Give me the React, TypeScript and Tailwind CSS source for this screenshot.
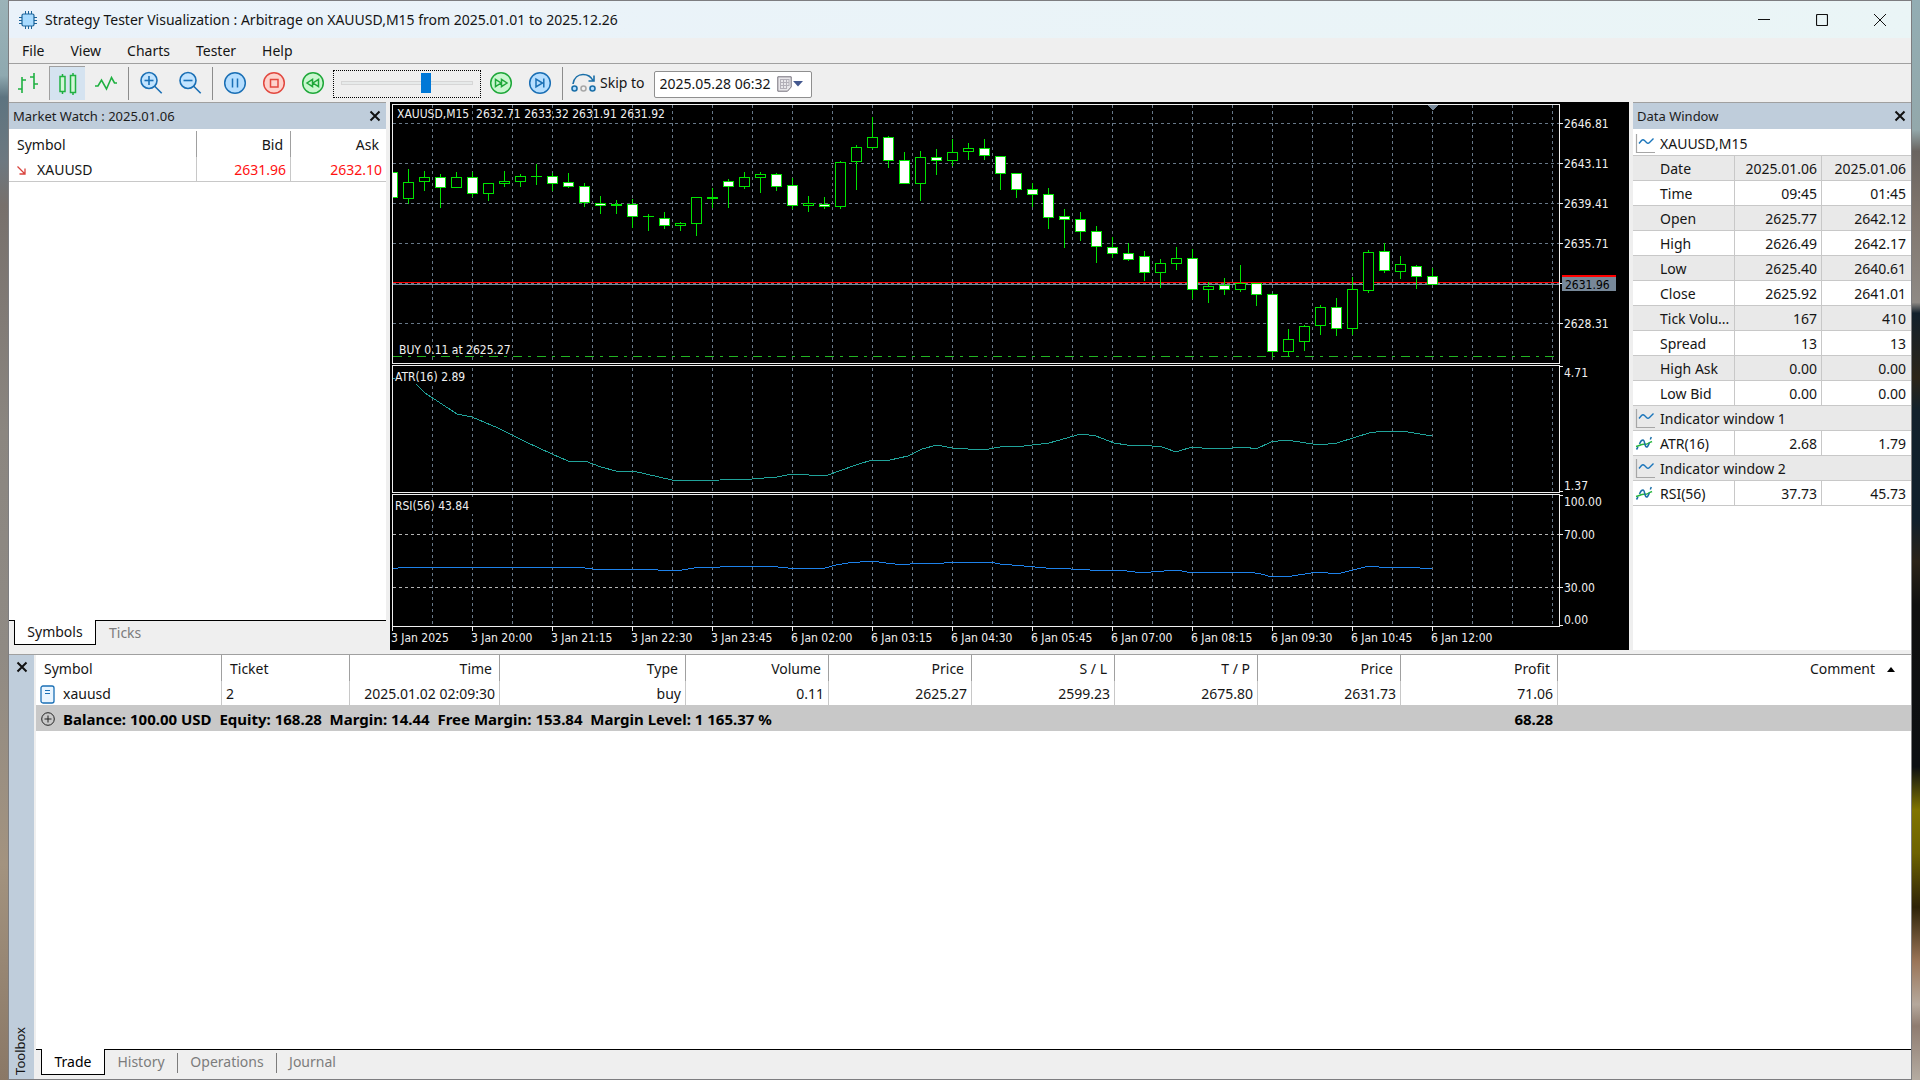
import React from "react";

const MENU = ["File", "View", "Charts", "Tester", "Help"];

const TIME_LABELS = [
	"3 Jan 2025",
	"3 Jan 20:00",
	"3 Jan 21:15",
	"3 Jan 22:30",
	"3 Jan 23:45",
	"6 Jan 02:00",
	"6 Jan 03:15",
	"6 Jan 04:30",
	"6 Jan 05:45",
	"6 Jan 07:00",
	"6 Jan 08:15",
	"6 Jan 09:30",
	"6 Jan 10:45",
	"6 Jan 12:00",
];

const PRICES = [
	{ y: 21, label: "2646.81" },
	{ y: 61, label: "2643.11" },
	{ y: 101, label: "2639.41" },
	{ y: 141, label: "2635.71" },
	{ y: 181, label: "" },
	{ y: 221, label: "2628.31" },
];

// high, body top, body bottom, low, bearish (chart pixels, one candle every 16px)
const CANDLES = [
	[70, 70, 95, 95, 1],
	[67, 80, 96, 101, 0],
	[69, 75, 79, 88, 0],
	[72, 75, 85, 105, 1],
	[70, 75, 85, 85, 0],
	[70, 75, 91, 94, 1],
	[81, 81, 91, 98, 0],
	[69, 79, 81, 84, 0],
	[72, 74, 79, 84, 0],
	[62, 74, 74, 82, 0],
	[71, 74, 81, 88, 1],
	[71, 80, 84, 85, 1],
	[81, 84, 100, 104, 1],
	[94, 101, 103, 111, 1],
	[98, 102, 103, 111, 0],
	[97, 102, 114, 125, 1],
	[112, 114, 114, 128, 0],
	[110, 116, 123, 126, 1],
	[120, 121, 123, 128, 0],
	[95, 95, 121, 133, 0],
	[86, 95, 96, 105, 0],
	[77, 79, 84, 105, 1],
	[70, 75, 84, 86, 0],
	[70, 72, 75, 90, 0],
	[71, 72, 84, 88, 1],
	[76, 83, 103, 106, 1],
	[94, 101, 103, 109, 0],
	[95, 102, 104, 106, 1],
	[59, 60, 104, 106, 0],
	[43, 45, 59, 87, 0],
	[15, 35, 45, 46, 0],
	[34, 35, 58, 65, 1],
	[50, 58, 81, 81, 1],
	[49, 55, 81, 98, 0],
	[47, 55, 58, 72, 1],
	[37, 50, 58, 63, 0],
	[41, 46, 49, 57, 0],
	[37, 46, 53, 57, 1],
	[54, 54, 71, 87, 1],
	[71, 71, 87, 95, 1],
	[81, 87, 92, 104, 1],
	[86, 92, 115, 126, 1],
	[107, 114, 117, 145, 1],
	[110, 117, 129, 138, 1],
	[124, 129, 144, 160, 1],
	[135, 145, 151, 155, 1],
	[141, 151, 157, 158, 1],
	[149, 154, 170, 178, 1],
	[157, 161, 170, 185, 0],
	[145, 156, 161, 167, 0],
	[147, 156, 187, 196, 1],
	[180, 184, 187, 200, 0],
	[176, 183, 187, 192, 1],
	[163, 181, 187, 189, 0],
	[181, 181, 192, 203, 1],
	[191, 192, 249, 254, 1],
	[227, 237, 249, 254, 0],
	[223, 224, 239, 248, 0],
	[203, 205, 223, 232, 0],
	[196, 205, 226, 233, 1],
	[175, 187, 226, 232, 0],
	[148, 150, 188, 190, 0],
	[141, 149, 168, 170, 1],
	[154, 162, 169, 176, 0],
	[163, 164, 174, 186, 1],
	[166, 174, 182, 182, 1],
];

const ATR =
	"2,276 7,276 25,281 35,291 67,312 82,315 108,326 136,340 162,352 178,359 195,359 211,365 226,369 243,369 282,378 292,379 330,378 362,377 387,375 402,372 435,374 466,363 482,358 500,358 518,354 532,347 547,343 562,346 593,348 610,345 634,344 659,341 691,332 706,334 724,341 737,343 762,344 772,345 786,350 802,345 812,346 842,346 855,345 866,347 881,340 896,338 930,343 947,341 979,331 994,329 1018,330 1042,334";

const RSI =
	"2,467 14,465 42,465 53,466 70,465 85,466 91,465 187,465 203,467 265,467 268,468 292,468 304,466 330,465 346,464 378,464 398,466 435,466 446,463 458,461 482,459 496,461 514,463 526,461 554,461 574,460 600,460 610,462 634,464 656,466 681,467 700,468 728,468 745,470 761,470 787,468 802,471 822,470 838,471 859,470 871,472 882,475 902,474 928,470 947,472 979,464 998,466 1018,465 1042,467";

type DataRow = { kind?: "window" | "indicator"; name: string; values?: string[] };

const DATA_ROWS: DataRow[] = [
	{ kind: "window", name: "XAUUSD,M15" },
	{ name: "Date", values: ["2025.01.06", "2025.01.06"] },
	{ name: "Time", values: ["09:45", "01:45"] },
	{ name: "Open", values: ["2625.77", "2642.12"] },
	{ name: "High", values: ["2626.49", "2642.17"] },
	{ name: "Low", values: ["2625.40", "2640.61"] },
	{ name: "Close", values: ["2625.92", "2641.01"] },
	{ name: "Tick Volu...", values: ["167", "410"] },
	{ name: "Spread", values: ["13", "13"] },
	{ name: "High Ask", values: ["0.00", "0.00"] },
	{ name: "Low Bid", values: ["0.00", "0.00"] },
	{ kind: "window", name: "Indicator window 1" },
	{ kind: "indicator", name: "ATR(16)", values: ["2.68", "1.79"] },
	{ kind: "window", name: "Indicator window 2" },
	{ kind: "indicator", name: "RSI(56)", values: ["37.73", "45.73"] },
];

const TRADE_COLUMNS = [
	{ name: "Time", value: "2025.01.02 02:09:30" },
	{ name: "Type", value: "buy" },
	{ name: "Volume", value: "0.11" },
	{ name: "Price", value: "2625.27" },
	{ name: "S / L", value: "2599.23" },
	{ name: "T / P", value: "2675.80" },
	{ name: "Price", value: "2631.73" },
	{ name: "Profit", value: "71.06" },
];

const Separator = () => <span className="w-px h-[33px] mx-px bg-[#8c8c8c]" />;

interface ToolButtonProps {
	label: string;
	active?: boolean;
	children: React.ReactNode;
}

const ToolButton: React.FC<ToolButtonProps> = ({ label, active, children }) => (
	<button
		type="button"
		aria-label={label}
		className={
			active
				? "flex items-center justify-center w-9 h-[34px] bg-[#d5e3f0] border-t border-l border-[#a0a0a0]"
				: "flex items-center justify-center w-9 h-[34px]"
		}
	>
		{children}
	</button>
);

interface RoundIconProps {
	stroke: string;
	fill: string;
	children: React.ReactNode;
}

const RoundIcon: React.FC<RoundIconProps> = ({ stroke, fill, children }) => (
	<svg width="24" height="24" viewBox="0 0 24 24" fill="none" stroke={stroke} strokeWidth="1.5">
		<circle cx="12" cy="12" r="10.3" fill={fill} />
		{children}
	</svg>
);

const ZoomIcon = ({ plus }: { plus?: boolean }) => (
	<svg width="24" height="24" viewBox="0 0 24 24" fill="none" stroke="#1a6fb5" strokeWidth="1.6">
		<circle cx="10" cy="9.5" r="8" fill="#c2e4ff" />
		<path d="M5.5 9.5h9" />
		{plus && <path d="M10 5v9" />}
		<path d="M15.7 15.2l7 7" />
	</svg>
);

const CloseIcon = () => (
	<svg width="12" height="12" viewBox="0 0 12 12" stroke="#111" strokeWidth="2">
		<path d="M1.5 1.5l9 9M10.5 1.5l-9 9" />
	</svg>
);

const WindowIcon = () => (
	<svg width="20" height="20" viewBox="0 0 20 20" fill="none">
		<path d="M1.5 0v18.5H20" stroke="#a6a6a6" strokeWidth="1.2" />
		<path d="M4 9.5l2.500-3q1.500-1.500 3 0l2 2q1.500 1.500 3 0l4-4" stroke="#1a75bb" strokeWidth="1.4" />
	</svg>
);

const IndicatorIcon = () => (
	<svg width="18" height="16" viewBox="0 0 18 16" fill="none" strokeWidth="1.5">
		<path d="M1 10.500c3-.500 4-1.500 6-2s4 .500 6-1 3-1.500 4-2" stroke="#27b53c" />
		<path
			d="M1.500 13.500l1.500-2.500M4.500 8c1-2.800 2-4 3.500-4 2 0 1.500 7 3.500 7 1.500 0 2-2 2.800-4M15.300 3.500l1-2.500"
			stroke="#1a6fa8"
		/>
	</svg>
);

interface PanelHeaderProps {
	title: string;
}

const PanelHeader: React.FC<PanelHeaderProps> = ({ title }) => (
	<div className="flex items-center justify-between h-[27px] pl-1 pr-[5px] bg-[#bfcddb] border-t border-[#a0a0a0]">
		<h2 className="text-[13px] text-[#1c1c1c]">{title}</h2>
		<button type="button" aria-label={`Close ${title}`}>
			<CloseIcon />
		</button>
	</div>
);

const TitleBar = () => (
	<header className="flex items-center h-[37px] pl-[10px] pr-0.5 bg-linear-to-r from-[#eaf2fa] to-[#eaf5f6]">
		<svg width="18" height="18" viewBox="0 0 18 18" fill="none" stroke="#1b6399">
			<path d="M6.500 0v18M9.500 0v18M12.500 0v18M0 6.500h18M0 9.500h18M0 12.500h18" />
			<rect x="3" y="3" width="12" height="12" rx="1.5" fill="#a8dbff" strokeWidth="1.2" />
		</svg>
		<h1 className="flex-1 pl-2">
			Strategy Tester Visualization : Arbitrage on XAUUSD,M15 from 2025.01.01 to 2025.12.26
		</h1>
		<button type="button" aria-label="Minimize" className="flex justify-center w-[58px]">
			<svg width="12" height="12" viewBox="0 0 12 12" stroke="#111">
				<path d="M0 5.500h12" />
			</svg>
		</button>
		<button type="button" aria-label="Maximize" className="flex justify-center w-[58px]">
			<svg width="12" height="12" viewBox="0 0 12 12" stroke="#111" fill="none">
				<rect x="0.5" y="0.5" width="11" height="11" rx="1" strokeWidth="1.2" />
			</svg>
		</button>
		<button type="button" aria-label="Close" className="flex justify-center w-[58px]">
			<svg width="12" height="12" viewBox="0 0 12 12" stroke="#111">
				<path d="M0 0l12 12M12 0L0 12" />
			</svg>
		</button>
	</header>
);

const Toolbar = () => (
	<div className="flex items-center h-[38px] pl-px gap-[3px]">
		<ToolButton label="Bar chart">
			<svg width="22" height="22" viewBox="0 0 22 22" fill="none" stroke="#1fb141" strokeWidth="1.6">
				<path d="M5 5v16M5 8h4M1 17h4M17 1v16M13 5h4M17 12h4" />
			</svg>
		</ToolButton>
		<ToolButton label="Candlesticks" active>
			<svg width="20" height="22" viewBox="0 0 20 22" stroke="#1fb141" strokeWidth="1.5">
				<path d="M4.500 1v20M15 0v22" />
				<rect x="2" y="3.5" width="5" height="15" fill="#d3f5d8" />
				<rect x="12.5" y="2.5" width="5" height="17" fill="#d3f5d8" />
			</svg>
		</ToolButton>
		<ToolButton label="Line chart">
			<svg width="22" height="16" viewBox="0 0 22 16" fill="none" stroke="#1fb141" strokeWidth="1.6">
				<path d="M0 11h3l3.500-6 5 9 5-11.500 3 5.500h2.500" />
			</svg>
		</ToolButton>
		<Separator />
		<ToolButton label="Zoom in">
			<ZoomIcon plus />
		</ToolButton>
		<ToolButton label="Zoom out">
			<ZoomIcon />
		</ToolButton>
		<Separator />
		<ToolButton label="Pause">
			<RoundIcon stroke="#1a6fb5" fill="#b5deff">
				<path d="M9.500 7.500v9M14.500 7.500v9" />
			</RoundIcon>
		</ToolButton>
		<ToolButton label="Stop">
			<RoundIcon stroke="#e2483f" fill="#fdd3cd">
				<rect x="8.5" y="8.5" width="7.5" height="7.5" />
			</RoundIcon>
		</ToolButton>
		<ToolButton label="Slower">
			<RoundIcon stroke="#1fa83a" fill="#c9f7cf">
				<path d="M11.500 8.300v7.400L6 12zM17.500 8.300v7.400L12 12z" />
			</RoundIcon>
		</ToolButton>
		<div className="flex items-start w-[148px] h-7 mt-0.5 -mx-px px-[7px] pt-0.5 border border-dotted border-black">
			<input
				type="range"
				aria-label="Speed"
				min={0}
				max={32}
				defaultValue={21}
				className="appearance-none w-full h-5 bg-transparent [&::-webkit-slider-runnable-track]:h-1 [&::-webkit-slider-runnable-track]:bg-[#e7eaea] [&::-webkit-slider-runnable-track]:border [&::-webkit-slider-runnable-track]:border-[#d6d6d6] [&::-webkit-slider-thumb]:appearance-none [&::-webkit-slider-thumb]:w-[10px] [&::-webkit-slider-thumb]:h-5 [&::-webkit-slider-thumb]:-mt-[9px] [&::-webkit-slider-thumb]:bg-[#0078d7]"
			/>
		</div>
		<ToolButton label="Faster">
			<RoundIcon stroke="#1fa83a" fill="#c9f7cf">
				<path d="M6.500 8.300v7.400l5.500-3.700zM12.500 8.300v7.400l5.500-3.700z" />
			</RoundIcon>
		</ToolButton>
		<ToolButton label="Step forward">
			<RoundIcon stroke="#1a6fb5" fill="#b5deff">
				<path d="M8 8v8l6.500-4zM15.800 7.500v9" />
			</RoundIcon>
		</ToolButton>
		<Separator />
		<button type="button" className="flex items-center gap-1 pl-1 pr-1.5">
			<svg width="25" height="20" viewBox="0 0 25 20" fill="none" stroke="#1a6fa8" strokeWidth="1.6">
				<path d="M2 11C3 4.500 7.500 1.500 12 1.500c4.500 0 8 2 10 6M23 2.500V8h-5.500" />
				<circle cx="3.5" cy="15.5" r="2.5" fill="#b5deff" />
				<circle cx="12.5" cy="15.5" r="2.5" stroke="#a8a8a8" fill="#f2f2f2" />
				<circle cx="21.5" cy="15.5" r="2.5" fill="#b5deff" />
			</svg>
			Skip to
		</button>
		<div className="flex items-center w-[158px] h-[27px] mt-0.5 pl-[5px] pr-2 bg-white border border-[#8f8f8f] rounded-xs">
			<input
				type="text"
				aria-label="Skip to date"
				defaultValue="2025.05.28 06:32"
				className="flex-1 min-w-0 outline-none"
			/>
			<button type="button" aria-label="Open calendar" className="flex items-center gap-px">
				<svg width="15" height="16" viewBox="0 0 15 16" fill="none">
					<path d="M.8.800h13.400V11L10.500 15.200H.8z" fill="#e8e6ea" stroke="#74707a" />
					<path
						d="M3 3.500h9M3 6.500h9M3 9.500h9M3 12.500h7M3.500 3v10M6.500 3v10M9.500 3v10M12 3v7"
						stroke="#b2afb8"
					/>
				</svg>
				<svg width="10" height="6" viewBox="0 0 10 6">
					<path d="M0 0h10L5 5.500z" fill="#44588f" />
				</svg>
			</button>
		</div>
	</div>
);

const MarketWatch = () => (
	<section className="flex flex-col w-[377px]">
		<PanelHeader title="Market Watch : 2025.01.06" />
		<div className="flex-1 pt-0.5 bg-white">
			<table className="w-full table-fixed border-separate border-spacing-0 [&_th]:pt-0.5 [&_td]:pt-0.5">
				<colgroup>
					<col />
					<col className="w-[94px]" />
					<col className="w-[95px]" />
				</colgroup>
				<thead>
					<tr className="h-[26px]">
						<th className="pl-2 font-normal text-left border-r border-[#a0a0a0]">Symbol</th>
						<th className="pr-[7px] font-normal text-right border-r border-[#a0a0a0]">Bid</th>
						<th className="pr-[7px] font-normal text-right">Ask</th>
					</tr>
				</thead>
				<tbody>
					<tr className="h-[25px]">
						<td className="pl-2 border-r border-b border-[#c8c8c8]">
							<span className="flex items-center gap-[11px]">
								<svg width="9" height="9" viewBox="0 0 9 9" fill="none" stroke="#d9433d" strokeWidth="1.3">
									<path d="M.5.500l7.500 7.500M8 2.500V8H2.500" />
								</svg>
								XAUUSD
							</span>
						</td>
						<td className="pr-1 text-right text-[#ff1111] border-r border-b border-[#c8c8c8]">2631.96</td>
						<td className="pr-1 text-right text-[#ff1111] border-b border-[#c8c8c8]">2632.10</td>
					</tr>
				</tbody>
			</table>
		</div>
		<div className="flex h-[30px]">
			<span className="w-[5px] border-t border-black" />
			<button type="button" className="w-[82px] h-[25px] bg-white border-x border-b border-black">
				Symbols
			</button>
			<div className="flex-1 pl-[13px] border-t border-black">
				<button type="button" className="h-6 text-[#7c7c7c]">
					Ticks
				</button>
			</div>
		</div>
	</section>
);

const Chart = () => {
	const verticals = Array.from({ length: 29 }, (_, i) => 42 + i * 40);

	return (
		<svg
			viewBox="0 0 1239 548"
			className="flex-1 min-w-0 h-[548px] bg-black text-[12px] [font-family:'DejaVu_Sans_Condensed','DejaVu_Sans',sans-serif]"
			shapeRendering="crispEdges"
			fill="none"
		>
			<g stroke="#677888" strokeDasharray="3 3">
				{verticals.map((x) => (
					<path key={x} d={`M${x + 0.5} 3V261M${x + 0.5} 266V390M${x + 0.5} 393V524`} />
				))}
				{PRICES.map((p) => (
					<path key={p.y} d={`M3 ${p.y + 0.5}H1169`} />
				))}
			</g>
			<path d="M3 432.500H1169M3 485.500H1169" stroke="#b4b4b4" strokeDasharray="3 3" />
			<path d="M3 180.500H1169" stroke="#ff0000" />
			<path d="M3 182.500H1169" stroke="#778899" />
			<path d="M3 254.500H1169" stroke="#22b422" strokeDasharray="9 6 3 6" />

			{CANDLES.map(([high, top, bottom, low, bearish], i) => {
				const x = 2 + i * 16;
				return (
					<g key={i} stroke="#00e400">
						<path d={`M${x + 0.5} ${high}V${top}M${x + 0.5} ${bottom}V${low + 1}`} />
						{top === bottom ? (
							<path d={`M${x - 5} ${top + 0.5}H${x + 6}`} />
						) : (
							<rect
								x={x - 4.5}
								y={top + 0.5}
								width="10"
								height={bottom - top}
								fill={bearish ? "#fff" : "#000"}
							/>
						)}
					</g>
				);
			})}
			<rect x="0" y="3" width="2" height="258" fill="#000" />
			<path d="M1037 3h11l-5.500 5.500z" fill="#778899" />

			<polyline points={ATR} stroke="#20a39a" />
			<polyline points={RSI} stroke="#1e82ea" />

			<g stroke="#f0f0f0">
				<path d="M2.500 2.500H1169.500V261.500H2.500zM2.500 263.500H1169.500V390.500H2.500zM2.500 392.500H1169.500V524.500H2.500z" />
				{PRICES.map((p) => (
					<path key={p.y} d={`M1169 ${p.y + 0.5}h4`} />
				))}
				<path d="M1169 264.500h4M1169 389.500h4M1169 393.500h4M1169 432.500h4M1169 485.500h4M1169 523.500h4" />
				{TIME_LABELS.map((t, i) => (
					<path key={t} d={`M${2.5 + i * 80} 524v5`} />
				))}
			</g>

			<rect x="5" y="266" width="77" height="16" fill="#000" />
			<rect x="5" y="395" width="79" height="17" fill="#000" />
			<rect x="1172" y="173" width="54" height="16" fill="#778899" />
			<rect x="1172" y="173" width="54" height="2" fill="#ff0000" />

			<g fill="#f0f0f0">
				<text x="7" y="16" xmlSpace="preserve">
					{"XAUUSD,M15  2632.71 2633.32 2631.91 2631.92"}
				</text>
				<text x="9" y="252">BUY 0.11 at 2625.27</text>
				<text x="5" y="279">ATR(16) 2.89</text>
				<text x="5" y="408">RSI(56) 43.84</text>
				{PRICES.map((p) => (
					<text key={p.y} x="1174" y={p.y + 5}>
						{p.label}
					</text>
				))}
				<text x="1174" y="275">4.71</text>
				<text x="1174" y="388">1.37</text>
				<text x="1174" y="404">100.00</text>
				<text x="1174" y="437">70.00</text>
				<text x="1174" y="490">30.00</text>
				<text x="1174" y="522">0.00</text>
				{TIME_LABELS.map((t, i) => (
					<text key={t} x={1 + i * 80} y="540">
						{t}
					</text>
				))}
			</g>
			<text x="1175" y="187" fill="#000">
				2631.96
			</text>
		</svg>
	);
};

const DataWindow = () => (
	<section className="flex flex-col w-[278px]">
		<PanelHeader title="Data Window" />
		<div className="flex-1 pt-0.5 bg-white">
			<table className="w-full table-fixed border-separate border-spacing-0 [&_th]:pt-0.5 [&_td]:pt-0.5">
				<colgroup>
					<col className="w-[102px]" />
					<col className="w-[87px]" />
					<col />
				</colgroup>
				<tbody>
					{DATA_ROWS.map((row, i) => (
						<tr key={row.name} className={i % 2 ? "h-[25px] bg-[#e9e9e9]" : "h-[25px]"}>
							<th
								colSpan={row.values ? 1 : 3}
								className={
									row.values
										? "pl-0.5 font-normal text-left whitespace-nowrap border-r border-b border-[#c8c8c8]"
										: "pl-0.5 font-normal text-left whitespace-nowrap border-b border-[#c8c8c8] bg-inherit"
								}
							>
								<span className="flex items-center">
									<span className="w-[25px]">
										{row.kind === "window" && <WindowIcon />}
										{row.kind === "indicator" && <IndicatorIcon />}
									</span>
									{row.name}
								</span>
							</th>
							{row.values && (
								<>
									<td className="pr-1 text-right border-r border-b border-[#c8c8c8]">{row.values[0]}</td>
									<td className="pr-[5px] text-right border-b border-[#c8c8c8]">{row.values[1]}</td>
								</>
							)}
						</tr>
					))}
				</tbody>
			</table>
		</div>
	</section>
);

const Toolbox = () => (
	<section className="flex flex-1 border-t border-[#a0a0a0]">
		<div className="flex flex-col items-center justify-between w-[25px] pt-1.5 pb-1 bg-[#bfcddb]">
			<button type="button" aria-label="Close Toolbox">
				<CloseIcon />
			</button>
			<h2 className="rotate-180 pl-1 text-[13px] leading-4 [writing-mode:vertical-rl]">Toolbox</h2>
		</div>
		<div className="flex flex-col flex-1 ml-0.5">
			<div className="flex-1 bg-white">
				<table className="w-full table-fixed border-separate border-spacing-0 [&_th]:pt-0.5 [&_td]:pt-0.5">
					<colgroup>
						<col className="w-[186px]" />
						<col className="w-[128px]" />
						<col className="w-[150px]" />
						<col className="w-[186px]" />
						<col className="w-[143px]" />
						<col className="w-[143px]" />
						<col className="w-[143px]" />
						<col className="w-[143px]" />
						<col className="w-[143px]" />
						<col className="w-[157px]" />
						<col />
					</colgroup>
					<thead>
						<tr className="h-[26px]">
							<th className="pl-2 font-normal text-left border-r border-[#a0a0a0]">Symbol</th>
							<th className="pl-2 font-normal text-left border-r border-[#a0a0a0]">Ticket</th>
							{TRADE_COLUMNS.map((c, i) => (
								<th key={i} className="pr-[7px] font-normal text-right border-r border-[#a0a0a0]">
									{c.name}
								</th>
							))}
							<th className="pr-4 font-normal">
								<span className="flex items-center justify-end gap-3">
									Comment
									<svg width="8" height="5" viewBox="0 0 8 5">
										<path d="M4 0l4 5H0z" fill="#000" />
									</svg>
								</span>
							</th>
						</tr>
					</thead>
					<tbody>
						<tr className="h-6">
							<td className="pl-1 border-r border-[#c8c8c8]">
								<span className="flex items-center gap-2">
									<svg width="15" height="19" viewBox="0 0 15 19" fill="none" stroke="#1a6fb5">
										<rect x="1" y="1" width="13" height="17" rx="2" fill="#e9f5ff" strokeWidth="1.3" />
										<path d="M5 5.500h5M5 8.500h5" />
									</svg>
									xauusd
								</span>
							</td>
							<td className="pl-1 border-r border-[#c8c8c8]">2</td>
							{TRADE_COLUMNS.map((c, i) => (
								<td key={i} className="pr-1 text-right border-r border-[#c8c8c8]">
									{c.value}
								</td>
							))}
							<td />
						</tr>
						<tr className="h-[26px] text-[15px] font-bold text-black bg-[#c8c8c8]">
							<td colSpan={9} className="pl-[5px]">
								<span className="flex items-center gap-2 whitespace-pre">
									<svg width="14" height="14" viewBox="0 0 14 14" fill="none" stroke="#222">
										<circle cx="7" cy="7" r="6.3" />
										<path d="M7 3.500v7M3.500 7h7" />
									</svg>
									{"Balance: 100.00 USD  Equity: 168.28  Margin: 14.44  Free Margin: 153.84  Margin Level: 1 165.37 %"}
								</span>
							</td>
							<td className="pr-[5px] text-right">68.28</td>
							<td />
						</tr>
					</tbody>
				</table>
			</div>
			<div className="flex h-[30px] text-[#7c7c7c]">
				<span className="w-[5px] border-t border-black" />
				<button
					type="button"
					className="w-16 h-[26px] text-black bg-white border-x border-b border-black"
				>
					Trade
				</button>
				<div className="flex items-start flex-1 border-t border-black">
					<button type="button" className="w-[72px] h-6">
						History
					</button>
					<span className="w-px h-5 mt-[3px] bg-[#7c7c7c]" />
					<button type="button" className="w-[98px] h-6">
						Operations
					</button>
					<span className="w-px h-5 mt-[3px] bg-[#7c7c7c]" />
					<button type="button" className="w-[71px] h-6">
						Journal
					</button>
				</div>
			</div>
		</div>
	</section>
);

const App = () => {
	return (
		<div className="flex h-screen overflow-hidden text-[14px] leading-5 text-[#151515] [font-family:'Noto_Sans','Open_Sans',sans-serif]">
			<div className="w-2 bg-[linear-gradient(#9bb3b8,#8fa9b0_7%,#5d7480_9%,#6d7880_15%,#77706c_19%,#8b8680_40%,#8f8a84_60%,#a3937f_80%,#8a7866_100%)]" />
			<div className="flex flex-col flex-1 min-w-0 bg-[#efefef] border border-[#7d7d80]">
				<TitleBar />
				<nav className="flex items-center h-[26px] pl-px gap-0.5 border-b border-[#a0a0a0]">
					{MENU.map((item) => (
						<button key={item} type="button" className="px-3">
							{item}
						</button>
					))}
				</nav>
				<Toolbar />
				<main className="flex gap-1 mb-1">
					<MarketWatch />
					<Chart />
					<DataWindow />
				</main>
				<Toolbox />
			</div>
			<div className="w-2 bg-[linear-gradient(#93adb3,#93a8ab_12%,#6a6460_14%,#80766e_20%,#8f8a85_28%,#13212c_29%,#2c2418_35%,#13212c_38%,#10202c_48%,#2b2318_52%,#101010_56%,#0c0f12_71%,#807400_75%,#6d6200_79%,#2e2308_84%,#9a7558_89%,#b5a89c_93%,#8f7c70_95%,#b5aca2_100%)]" />
		</div>
	);
};

export default App;
